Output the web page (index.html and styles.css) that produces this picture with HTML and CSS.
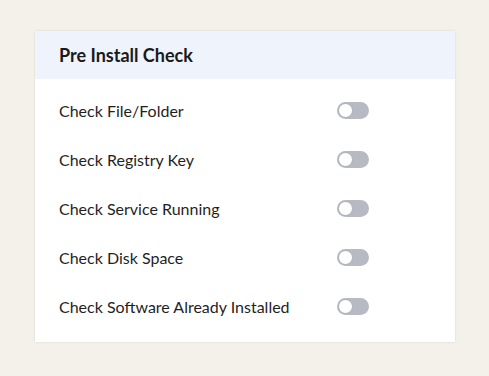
FILE: index.html
```html
<!DOCTYPE html>
<html>
<head>
<meta charset="utf-8">
<link rel="stylesheet" href="styles.css">
</head>
<body>
<div class="card">
  <div class="card-header">Pre Install Check</div>
  <div class="card-body">
    <div class="row"><span class="label">Check File/Folder</span><span class="toggle"><span class="knob"></span></span></div>
    <div class="row"><span class="label">Check Registry Key</span><span class="toggle"><span class="knob"></span></span></div>
    <div class="row"><span class="label">Check Service Running</span><span class="toggle"><span class="knob"></span></span></div>
    <div class="row"><span class="label">Check Disk Space</span><span class="toggle"><span class="knob"></span></span></div>
    <div class="row"><span class="label">Check Software Already Installed</span><span class="toggle"><span class="knob"></span></span></div>
  </div>
</div>
</body>
</html>
```
FILE: styles.css
```css
html, body {
  margin: 0;
  padding: 0;
}
body {
  background: #f4f0ea;
  font-family: Lato, "Liberation Sans", sans-serif;
  color: #1f1f1f;
  padding: 31px 34px 0 35px;
  height: 376px;
  box-sizing: border-box;
}
.card {
  width: 420px;
  background: #fff;
  box-shadow: 0 0 2px rgba(0,0,0,0.12);
}
.card-header {
  background: #eff3fb;
  height: 48px;
  display: flex;
  align-items: center;
  padding-left: 24px;
  font-size: 18px;
  font-weight: 700;
  color: #1a1a1a;
}
.card-body {
  padding: 7px 0 11px 24px;
}
.row {
  height: 49px;
  display: grid;
  grid-template-columns: 278px 32px;
  align-items: center;
  font-size: 16px;
}
.toggle {
  width: 32px;
  height: 17px;
  border-radius: 9px;
  background: #b7bac2;
  position: relative;
  display: block;
}
.knob {
  position: absolute;
  left: 1px;
  top: 1px;
  width: 13px;
  height: 13px;
  border-radius: 50%;
  background: #fff;
  border: 1px solid #a9adb5;
}
```
